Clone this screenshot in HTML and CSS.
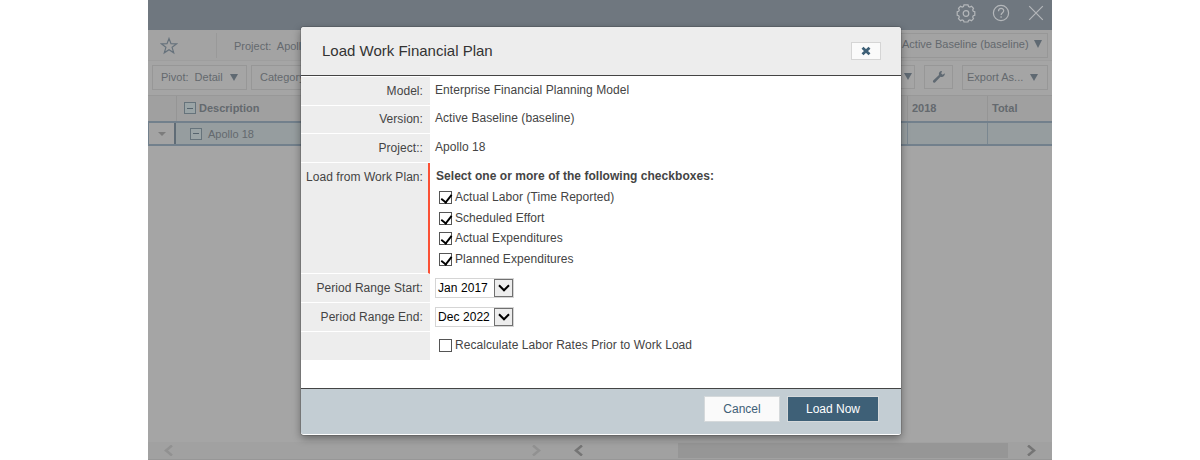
FILE: index.html
```html
<!DOCTYPE html>
<html>
<head>
  <meta charset="UTF-8">
  <title>Load Work Financial Plan</title>
  <link rel="stylesheet" href="styles.css">
</head>
<body>
  <div class="app">
    <div class="topbar">
      <svg width="20" height="20" viewBox="0 0 20 20">
        <path d="M8 1.800h4l.5 1.700 1.400.6 1.600-.8 2 2-.8 1.600.6 1.400 1.500.5v3.400l-1.500.5-.6 1.400.8 1.600-2 2-1.600-.8-1.400.6-.5 1.500H8l-.5-1.500-1.400-.6-1.600.8-2-2 .8-1.600-.6-1.400-1.500-.5V8.800l1.500-.5.6-1.400-.8-1.600 2-2 1.600.8 1.400-.6z"/>
        <circle cx="10" cy="10.500" r="2.800"/>
      </svg>
      <svg width="18" height="18" viewBox="0 0 18 18">
        <circle cx="9" cy="9" r="7.600"/>
        <path d="M6.500 7.200c0-3.700 5.200-3.500 5.200-.5 0 2-2.600 2-2.600 4.300M9.100 12.300v1.500"/>
      </svg>
      <svg width="16" height="16" viewBox="0 0 16 16">
        <path d="M1.200 1.200l13.600 13.600M14.800 1.200L1.200 14.800"/>
      </svg>
    </div>

    <div class="project-bar">
      <div class="star">
        <svg width="18" height="18" viewBox="0 0 18 18">
          <path d="M9 1.500l2 5.200 5.500.2-4.400 3.400 1.600 5.500L9 12.700l-4.700 3.100 1.600-5.500L1.500 6.900l5.500-.2z"/>
        </svg>
      </div>
      <span class="project-name">Project:&nbsp; Apollo 18</span>
      <div class="btn baseline">Active Baseline (baseline) <i class="arrow"></i></div>
    </div>

    <div class="toolbar">
      <div class="btn pivot">Pivot:&nbsp; Detail <i class="arrow"></i></div>
      <div class="btn category">Category: All</div>
      <div class="btn more"><i class="arrow"></i></div>
      <div class="btn wrench">
        <svg width="14" height="14" viewBox="0 0 14 14">
          <path d="M12.800 3.300l-2.100 1.500-1.500-1.300.8-2.400C8 .8 6.300 2.700 7 5L1.200 10.600c-1 1.200.6 2.800 1.800 1.800L8.500 6.800c2.400.9 4.700-1.100 4.300-3.500z"/>
        </svg>
      </div>
      <div class="btn export">Export As... <i class="arrow"></i></div>
    </div>

    <div class="grid grid-head">
      <div></div>
      <div class="desc"><i class="toggle"></i>Description</div>
      <div class="cell">2018</div>
      <div class="cell">Total</div>
    </div>
    <div class="grid grid-row">
      <div class="row-menu"><i></i></div>
      <div class="desc"><i class="toggle"></i>Apollo 18</div>
      <div class="cell"></div>
      <div class="cell"></div>
    </div>

    <div class="scrollbars">
      <div class="scroll left">
        <svg width="9" height="11" viewBox="0 0 9 11"><path d="M8 .5L2 5.500l6 5"/></svg>
        <svg width="9" height="11" viewBox="0 0 9 11"><path d="M1 .5l6 5-6 5"/></svg>
      </div>
      <div class="scroll right">
        <svg width="9" height="11" viewBox="0 0 9 11"><path d="M8 .5L2 5.500l6 5"/></svg>
        <div class="thumb"></div>
        <svg width="9" height="11" viewBox="0 0 9 11"><path d="M1 .5l6 5-6 5"/></svg>
      </div>
    </div>

    <div class="modal">
      <div class="modal-head">
        <h1>Load Work Financial Plan</h1>
        <button class="close">
          <svg width="10" height="10" viewBox="0 0 10 10"><path d="M1.500 1.700l7 6.600M8.500 1.700l-7 6.600"/></svg>
        </button>
      </div>

      <div class="form">
        <div class="label">Model:</div>
        <div class="value">Enterprise Financial Planning Model</div>
        <div class="label version">Version:</div>
        <div class="value version">Active Baseline (baseline)</div>
        <div class="label">Project::</div>
        <div class="value">Apollo 18</div>
        <div class="label required">Load from Work Plan:</div>
        <div class="value options">
          <b>Select one or more of the following checkboxes:</b>
          <label><input type="checkbox" checked><span>Actual Labor (Time Reported)</span></label>
          <label><input type="checkbox" checked><span>Scheduled Effort</span></label>
          <label><input type="checkbox" checked><span>Actual Expenditures</span></label>
          <label><input type="checkbox" checked><span>Planned Expenditures</span></label>
        </div>
        <div class="label">Period Range Start:</div>
        <div class="value period">
          <div class="select"><span>Jan 2017</span><i><svg width="12" height="8" viewBox="0 0 12 8"><path d="M1 1.300l5 5 5-5"/></svg></i></div>
        </div>
        <div class="label">Period Range End:</div>
        <div class="value period">
          <div class="select"><span>Dec 2022</span><i><svg width="12" height="8" viewBox="0 0 12 8"><path d="M1 1.300l5 5 5-5"/></svg></i></div>
        </div>
        <div class="label last"></div>
        <div class="value recalc">
          <label><input type="checkbox"><span>Recalculate Labor Rates Prior to Work Load</span></label>
        </div>
      </div>

      <div class="modal-foot">
        <button class="cancel">Cancel</button>
        <button class="load">Load Now</button>
      </div>
    </div>
  </div>
</body>
</html>
```

FILE: styles.css
```css
* {
  box-sizing: border-box;
}

body {
  margin: 0;
  background: #fff;
  font-family: "Liberation Sans", Arial, sans-serif;
  font-size: 12px;
  color: #444;
}

svg {
  display: block;
  fill: none;
}

.app {
  position: relative;
  display: flex;
  flex-direction: column;
  width: 904px;
  height: 460px;
  margin: 0 auto;
  overflow: hidden;
  background: #a5a5a5;
  font-size: 11px;
  color: #64696e;
}

.topbar {
  display: flex;
  justify-content: flex-end;
  align-items: center;
  height: 30px;
  padding: 0 8px 4px 0;
  background: #6f777f;
}

.topbar svg {
  stroke: #b4b7ba;
  stroke-width: 1.2;
}

.topbar svg + svg {
  margin-left: 16px;
}

.topbar svg:last-child {
  margin-left: 18px;
}

.project-bar {
  display: flex;
  align-items: center;
  height: 31px;
  padding-right: 4px;
  border-bottom: 1px solid #9e9e9e;
  background: #a3a3a3;
}

.star {
  width: 69px;
  height: 25px;
  padding: 4px 0 0 12px;
  border-right: 1px solid #999;
}

.star svg {
  stroke: #66727c;
  stroke-width: 1.2;
}

.project-name {
  padding-top: 1px;
  margin-left: 17px;
}

.btn {
  display: flex;
  align-items: center;
  height: 25px;
  padding-bottom: 1px;
  border: 1px solid #979797;
  white-space: nowrap;
}

.arrow {
  border: 4px solid transparent;
  border-top: 7px solid #5f6972;
  border-bottom: 0;
}

.baseline {
  width: 169px;
  margin-left: auto;
  padding-left: 22px;
  padding-bottom: 3px;
}

.baseline .arrow {
  margin-left: 5px;
  border-top-width: 8px;
}

.toolbar {
  display: flex;
  height: 34px;
  padding: 4px 4px 0;
}

.pivot {
  width: 95px;
  padding-left: 8px;
}

.pivot .arrow,
.export .arrow {
  margin-left: 7px;
}

.category {
  width: 90px;
  margin-left: 4px;
  padding-left: 8px;
}

.more {
  justify-content: flex-end;
  width: 60px;
  height: 24px;
  margin-left: auto;
  padding-right: 2px;
}

.wrench {
  justify-content: center;
  width: 29px;
  height: 24px;
  margin: 0 9px;
}

.wrench path {
  fill: #5f6972;
}

.export {
  width: 86px;
  padding-left: 4px;
}

.grid {
  display: grid;
  grid-template-columns: 28px 1fr 80px 65px;
}

.grid-head {
  height: 26px;
  border-top: 1px solid #989898;
  background: #a0a0a0;
  font-weight: bold;
}

.grid > div {
  display: flex;
  align-items: center;
}

.grid-head > div {
  padding-bottom: 1px;
}

.grid .desc {
  padding-left: 7px;
  border-left: 1px solid #959595;
}

.grid .cell {
  padding-left: 4px;
  border-left: 1px solid #959595;
}

.toggle {
  display: flex;
  align-items: center;
  justify-content: center;
  width: 12px;
  height: 12px;
  margin-right: 3px;
  border: 1px solid #66737b;
  background: #9aa4a6;
}

.toggle::before {
  content: "";
  width: 6px;
  height: 1px;
  background: #56646e;
}

.grid-row {
  height: 25px;
  border-top: 2px solid #72808c;
  border-bottom: 2px solid #72808c;
  background: #969d9f;
}

.grid .row-menu {
  justify-content: center;
  border-left: 1px solid #72808c;
  border-right: 2px solid #606c76;
  background: #a3a3a3;
}

.row-menu i {
  border: 4px solid transparent;
  border-top-color: #7c7c7c;
  border-bottom: 0;
}

.grid-row .desc {
  padding-left: 14px;
  border-left: 0;
}

.grid-row .toggle {
  margin-right: 6px;
}

.grid-row .cell {
  border-left-color: #7a8790;
}

.scrollbars {
  display: flex;
  height: 18px;
  margin-top: auto;
  border-bottom: 1px solid #979797;
  background: #a1a1a1;
}

.scroll {
  display: flex;
  align-items: center;
  justify-content: space-between;
}

.left {
  width: 409px;
  padding: 0 16px;
}

.right {
  flex: 1;
  padding: 0 16px 0 17px;
}

.scroll path {
  stroke: #757575;
  stroke-width: 2.5;
}

.left path {
  stroke: #919191;
}

.thumb {
  width: 330px;
  height: 15px;
  margin-left: 76px;
  background: #969696;
}

.modal {
  position: absolute;
  left: 153px;
  top: 27px;
  display: flex;
  flex-direction: column;
  width: 600px;
  height: 408px;
  overflow: hidden;
  border-radius: 3px;
  border-bottom: 1px solid #fff;
  background: #fff;
  box-shadow: 0 3px 9px rgba(0, 0, 0, .4), 0 0 0 1px rgba(0, 0, 0, .12);
  font-size: 12px;
  color: #444;
}

.modal-head {
  display: flex;
  align-items: center;
  justify-content: space-between;
  height: 49px;
  padding: 0 20px 0 21px;
  border-bottom: 1px solid #444;
  background: #ededed;
}

.modal-head h1 {
  margin: 0 0 2px;
  font-size: 15px;
  font-weight: normal;
  color: #333;
}

.close {
  display: flex;
  align-items: center;
  justify-content: center;
  width: 30px;
  height: 18px;
  padding: 0;
  border: 1px solid #d5d5d5;
  background: #fafafa;
}

.close path {
  stroke: #3e6077;
  stroke-width: 2.8;
}

.form {
  display: grid;
  grid-template-columns: 129px 1fr;
  grid-template-rows: 29px 28px 29px 111px 29px 29px 28px;
  padding-top: 1px;
  letter-spacing: .06px;
}

.label {
  padding: 7px 7px 0 0;
  border-bottom: 1px solid #fff;
  background: #ededed;
  text-align: right;
  line-height: 14px;
  white-space: nowrap;
}

.required {
  padding-right: 5px;
  border-right: 2px solid #fb5034;
}

.last {
  border-bottom: 0;
}

.value {
  padding: 6px 0 0 5px;
  line-height: 14px;
}

.label.version {
  padding-top: 6px;
}

.value.version {
  padding-top: 5px;
}

.options b {
  display: block;
  margin: 0 0 4px 1px;
  letter-spacing: .04px;
}

.value label {
  display: flex;
  height: 20.7px;
}

.value input {
  flex: none;
  appearance: none;
  width: 13px;
  height: 13px;
  margin: 4px 3px 0 4px;
  border: 1px solid #555;
  background: #fff;
}

.value input:checked::before {
  content: "";
  display: block;
  width: 5px;
  height: 9px;
  margin: 0 0 0 3px;
  border: solid #000;
  border-width: 0 2px 2px 0;
  transform: rotate(38deg) scale(.95);
}

.value label span {
  padding-top: 3px;
}

.value.recalc {
  padding-top: 3px;
}

.value.period {
  padding-top: 4px;
}

.select {
  display: flex;
  align-items: center;
  justify-content: space-between;
  width: 79px;
  height: 20px;
  padding-left: 2px;
  border: 1px solid #d5d5d5;
  color: #000;
}

.select i {
  display: flex;
  align-items: center;
  justify-content: center;
  width: 19px;
  height: 18px;
  border: 1px solid #707070;
  background: #ededed;
}

.select path {
  stroke: #000;
  stroke-width: 2;
}

.modal-foot {
  display: flex;
  justify-content: flex-end;
  gap: 7px;
  height: 46px;
  margin-top: auto;
  padding: 7px 22px 0 0;
  border-top: 1px solid #444;
  background: #c3cdd3;
}

.modal-foot button {
  height: 26px;
  padding: 0;
  border: 1px solid #d5d9db;
  font: 12px "Liberation Sans", Arial, sans-serif;
}

.cancel {
  width: 76px;
  background: #fafafa;
  color: #3e6077;
}

.load {
  width: 92px;
  background: #3e6077;
  color: #fff;
}
```
